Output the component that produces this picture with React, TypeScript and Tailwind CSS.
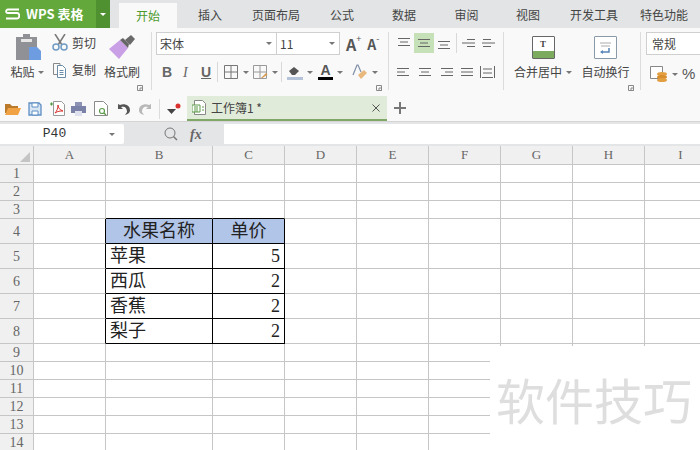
import React from "react";

const columns = [
  { label: "A", width: "w-[72px]" },
  { label: "B", width: "w-[107px]" },
  { label: "C", width: "w-[72px]" },
  { label: "D", width: "w-[72px]" },
  { label: "E", width: "w-[72px]" },
  { label: "F", width: "w-[72px]" },
  { label: "G", width: "w-[72px]" },
  { label: "H", width: "w-[72px]" },
  { label: "I", width: "w-[72px]" },
];

const rowHeights: Record<number, string> = {
  4: "h-[25px]",
  5: "h-[25px]",
  6: "h-[25px]",
  7: "h-[25px]",
  8: "h-[25px]",
};

const tabs = [
  { label: "插入", width: "w-[66px]" },
  { label: "页面布局", width: "w-[66px]" },
  { label: "公式", width: "w-[66px]" },
  { label: "数据", width: "w-[58px]" },
  { label: "审阅", width: "w-[67px]" },
  { label: "视图", width: "w-[56px]" },
  { label: "开发工具", width: "w-[76px]" },
  { label: "特色功能", width: "w-[64px]" },
];

const tableData: Record<number, [string, string]> = {
  4: ["水果名称", "单价"],
  5: ["苹果", "5"],
  6: ["西瓜", "2"],
  7: ["香蕉", "2"],
  8: ["梨子", "2"],
};

const Caret = () => (
  <svg width="6" height="3" viewBox="0 0 6 3" className="shrink-0">
    <path d="M0 0h6L3 3z" fill="#777" />
  </svg>
);

const Launcher = () => (
  <svg width="6" height="6" viewBox="0 0 6 6">
    <path d="M.5.5h5v5h-5zM3 3h2.500v2.500H3z" fill="none" stroke="#888" strokeWidth="1" />
  </svg>
);

const Sep = () => <div className="w-px h-[58px] bg-[#dcdcdc] shrink-0" />;
const SmallSep = () => <div className="w-px h-[20px] bg-[#d8d8d8] shrink-0" />;

const Lines = ({ rows }: { rows: [number, number][] }) => (
  <svg width="14" height="12" viewBox="0 0 14 12">
    {rows.map(([x, w], i) => (
      <path key={i} d={`M${x} ${2.5 + i * 3.5}h${w}`} stroke="#666" strokeWidth="1" />
    ))}
  </svg>
);

const GridIcon = ({ accent }: { accent?: boolean }) => (
  <svg width="16" height="16" viewBox="0 0 16 16">
    <path d="M1.500 1.500h13v13h-13zM8 1.500v13M1.500 8h13" fill="none" stroke={accent ? "#999" : "#777"} />
    {accent && <path d="M9 14l5-5 1.500 1.500-5 3.500z" fill="#d99a4e" />}
  </svg>
);

const Ribbon = () => (
  <div className="h-[68px] bg-[#f9f9f9] flex items-start pt-[4px] shrink-0">
    {/* clipboard */}
    <div className="w-[151px] h-[59px] flex shrink-0 relative">
      <div className="w-[52px] flex flex-col items-center pl-[5px]">
        <svg width="26" height="27" viewBox="0 0 26 27" className="mt-[1px]">
          <path d="M0 4h7V1h7v3h7v23H0z" fill="#8f9196" />
          <rect x="5" y="6" width="11" height="3" fill="#e6e6e6" />
          <path d="M13 14h8l4 4v9H13z" fill="#6d9de0" />
        </svg>
        <div className="flex items-center gap-[3px] mt-[5px] text-[12px] leading-[14px] text-[#444] -ml-[3px]">
          粘贴
          <Caret />
        </div>
      </div>
      <div className="w-[50px] flex flex-col gap-[10px] pt-[2px]">
        <div className="flex items-center gap-[4px] h-[17px]">
          <svg width="16" height="17" viewBox="0 0 16 17">
            <path d="M3 0l7 11M13 0L6 11" stroke="#777" strokeWidth="1.500" />
            <circle cx="4" cy="13" r="3" fill="none" stroke="#6f9bc4" strokeWidth="1.500" />
            <circle cx="12" cy="13" r="3" fill="none" stroke="#6f9bc4" strokeWidth="1.500" />
          </svg>
          <span className="text-[12px] text-[#444] leading-[14px]">剪切</span>
        </div>
        <div className="flex items-center gap-[4px] h-[17px]">
          <svg width="16" height="16" viewBox="0 0 16 16">
            <path d="M5 12.500H1.500v-11H8v2" fill="none" stroke="#888" />
            <path d="M5.500 3.500h5l3 3v9h-8z" fill="#fff" stroke="#6a8ca8" />
            <path d="M7.500 8.500h4M7.500 10.500h4M7.500 12.500h4" stroke="#6a8ca8" />
          </svg>
          <span className="text-[12px] text-[#444] leading-[14px]">复制</span>
        </div>
      </div>
      <div className="w-[40px] flex flex-col items-center">
        <svg width="26" height="24" viewBox="0 0 26 24" className="mt-[3px]">
          <path d="M0 14l11-9 8 8-9 11z" fill="#c9a0e6" />
          <path d="M11 5l3-2 6 6-1 4z" fill="#666" />
          <path d="M16 5l6-5 4 4-5 6z" fill="#6a6a6a" />
        </svg>
        <span className="mt-[6px] text-[12px] leading-[14px] text-[#444] whitespace-nowrap">格式刷</span>
      </div>
      <div className="absolute left-[137px] top-[53px]"><Launcher /></div>
    </div>
    <Sep />
    {/* font */}
    <div className="w-[236px] h-[59px] pl-[4px] shrink-0 relative">
      <div className="flex items-center">
        <div className="w-[184px] h-[23px] border border-[#cfcfcf] bg-white flex text-[12px] text-[#444]">
          <div className="w-[120px] border-r border-[#cfcfcf] flex items-center justify-between pl-[3px] pr-[4px]">
            宋体
            <Caret />
          </div>
          <div className="flex-1 flex items-center justify-between pl-[3px] pr-[4px]">
            11
            <Caret />
          </div>
        </div>
        <span className="ml-[6px] text-[16px] font-bold text-[#555] leading-none">A</span>
        <span className="text-[9px] text-[#555] -mt-[10px] leading-none">+</span>
        <span className="ml-[6px] text-[14px] font-bold text-[#555] leading-none">A</span>
        <span className="text-[9px] text-[#555] -mt-[10px] leading-none">-</span>
      </div>
      <div className="flex items-center mt-[7px] h-[20px]">
        <span className="w-[10px] ml-[6px] text-[14px] font-bold text-[#666] font-['Liberation_Sans',sans-serif]">B</span>
        <span className="w-[10px] ml-[11px] text-[14px] italic text-[#666] font-['Liberation_Serif',serif]">I</span>
        <span className="ml-[8px] mr-[6px] text-[14px] font-bold text-[#666] underline font-['Liberation_Sans',sans-serif]">U</span>
        <SmallSep />
        <div className="ml-[5px] flex items-center gap-[4px]"><GridIcon /><Caret /></div>
        <div className="ml-[3px] flex items-center gap-[4px]"><GridIcon accent /><Caret /></div>
        <div className="ml-[3px]"><SmallSep /></div>
        <div className="ml-[5px] flex items-center gap-[4px]">
          <svg width="16" height="16" viewBox="0 0 16 16">
            <path d="M2 7l5-4 5 4-4 4H5z" fill="#555" />
            <path d="M0 13h16v3H0z" fill="#b4c3d8" />
          </svg>
          <Caret />
        </div>
        <div className="ml-[5px] flex items-center gap-[4px]">
          <div className="w-[15px] h-[16px] flex flex-col items-center">
            <span className="text-[14px] font-bold leading-[13px] text-[#555] font-['Liberation_Sans',sans-serif]">A</span>
            <div className="w-[15px] h-[3px] bg-black" />
          </div>
          <Caret />
        </div>
        <div className="ml-[9px] flex items-center gap-[4px]">
          <svg width="16" height="16" viewBox="0 0 16 16">
            <path d="M1 11L5 1h1l3 7" fill="none" stroke="#7f8fa8" strokeWidth="1.200" />
            <path d="M6 11l6-5 3 3-6 6z" fill="#e8b87c" />
          </svg>
          <Caret />
        </div>
      </div>
      <div className="absolute left-[224px] top-[53px]"><Launcher /></div>
    </div>
    <Sep />
    {/* alignment */}
    <div className="w-[114px] h-[59px] pl-[5px] shrink-0">
      <div className="flex items-center h-[22px]">
        <div className="w-[20px] flex justify-center -mt-[3px]"><Lines rows={[[1, 12], [3, 8], [1, 12]]} /></div>
        <div className="w-[20px] h-[20px] bg-[#c6e0b8] flex items-center justify-center"><Lines rows={[[1, 12], [3, 8], [1, 12]]} /></div>
        <div className="w-[20px] flex justify-center pt-[4px]"><Lines rows={[[1, 12], [3, 8], [1, 12]]} /></div>
        <div className="ml-[2px]"><SmallSep /></div>
        <div className="ml-[5px] w-[16px]"><Lines rows={[[5, 8], [0, 13], [5, 8]]} /></div>
        <div className="ml-[4px] w-[16px]"><Lines rows={[[1, 8], [0, 13], [1, 8]]} /></div>
      </div>
      <div className="flex items-center h-[20px] mt-[8px] ml-[3px] gap-[8px]">
        <Lines rows={[[0, 12], [0, 8], [0, 12]]} />
        <Lines rows={[[0, 12], [2, 8], [0, 12]]} />
        <Lines rows={[[0, 12], [4, 8], [0, 12]]} />
        <div className="-ml-[2px]"><Lines rows={[[0, 12], [0, 12], [0, 12]]} /></div>
        <svg width="15" height="14" viewBox="0 0 15 14" className="-ml-[3px]">
          <path d="M.5 1v12M14.500 1v12M2 12.500h11M3 4h9M3 8h9" stroke="#666" fill="none" />
        </svg>
      </div>
    </div>
    <Sep />
    {/* merge */}
    <div className="w-[136px] h-[59px] flex shrink-0 relative">
      <div className="w-[77px] flex flex-col items-center pl-[1px]">
        <div className="w-[23px] h-[23px] mt-[4px] border border-[#666] bg-white flex flex-col rounded-[1px]">
          <div className="flex-1 flex items-center justify-center text-[9px] font-bold leading-none text-[#444] font-['Liberation_Serif',serif]">T</div>
          <div className="h-[7px] bg-[#7cab5d]" />
        </div>
        <div className="mt-[6px] flex items-center gap-[4px] text-[12px] leading-[14px] text-[#444] whitespace-nowrap">
          合并居中
          <Caret />
        </div>
      </div>
      <div className="flex-1 flex flex-col items-center pr-[10px]">
        <div className="w-[23px] h-[23px] mt-[4px] border border-[#8a9aa8] bg-white rounded-[1px] flex items-center justify-center">
          <svg width="15" height="15" viewBox="0 0 15 15">
            <path d="M2 3h11M3 6h9" stroke="#aaa" />
            <path d="M3 12h8V8" fill="none" stroke="#5a85b8" strokeWidth="1.500" />
            <path d="M5 10v4l-3-2z" fill="#5a85b8" />
          </svg>
        </div>
        <span className="mt-[6px] text-[12px] leading-[14px] text-[#444] whitespace-nowrap">自动换行</span>
      </div>
      <div className="absolute left-[124px] top-[53px]"><Launcher /></div>
    </div>
    <Sep />
    {/* number */}
    <div className="flex-1 pl-[5px] overflow-hidden">
      <div className="w-[70px] h-[23px] border border-[#cfcfcf] bg-white text-[12px] text-[#444] pl-[5px] flex items-center">常规</div>
      <div className="flex items-center mt-[8px] pl-[4px]">
        <svg width="18" height="18" viewBox="0 0 18 18">
          <path d="M.5 1.500h12v12H.5z" fill="#fff" stroke="#888" />
          <ellipse cx="12" cy="9" rx="5" ry="2" fill="#e3a043" />
          <ellipse cx="12" cy="12" rx="5" ry="2" fill="#d98e2e" />
          <ellipse cx="12" cy="15" rx="5" ry="2" fill="#e3a043" />
        </svg>
        <div className="ml-[4px]"><Caret /></div>
        <span className="ml-[4px] text-[15px] text-[#555] font-['Liberation_Sans',sans-serif]">%</span>
      </div>
    </div>
  </div>
);

const QuickBar = () => (
  <div className="h-[25px] bg-[#f9f9f9] flex items-start shrink-0">
    <div className="w-[187px] h-[25px] flex items-center pl-[5px] shrink-0">
      <svg width="16" height="13" viewBox="0 0 16 13">
        <path d="M0 2h5l2 2h6v2H4L2 11H0z" fill="#b97a2c" />
        <path d="M3 6h13l-3 7H0z" fill="#f0a245" />
      </svg>
      <svg width="14" height="14" viewBox="0 0 14 14" className="ml-[7px]">
        <path d="M1 1h10l2 2v10H1z" fill="#d8e6f4" stroke="#5f8fc4" strokeWidth="1.300" />
        <path d="M4 1h6v4H4zM4 9h6v4H4z" fill="#fff" stroke="#5f8fc4" />
      </svg>
      <svg width="15" height="15" viewBox="0 0 15 15" className="ml-[8px]">
        <path d="M3.500.5h8l3 3v11h-11z" fill="#fff" stroke="#999" />
        <path d="M5 12c2-2 3-5 3-8 0 3 2 5 5 6-3 0-5 0-8 2z" fill="none" stroke="#d9322e" />
        <path d="M0 3h3M1.500 1.500v3" stroke="#4a9a3a" strokeWidth="1.200" />
      </svg>
      <svg width="15" height="14" viewBox="0 0 15 14" className="ml-[6px]">
        <path d="M4 0h7v4H4z" fill="#8d93b5" />
        <path d="M0 4h15v7H0z" fill="#7b82a8" />
        <path d="M4 9h7v5H4z" fill="#dfe2ee" />
      </svg>
      <svg width="14" height="15" viewBox="0 0 14 15" className="ml-[8px]">
        <path d="M.5.500h9l4 4v10H.5z" fill="#fff" stroke="#8a8a8a" />
        <circle cx="8" cy="10" r="2.500" fill="none" stroke="#5a9a4a" strokeWidth="1.200" />
        <path d="M10 12l2 2" stroke="#5a9a4a" strokeWidth="1.200" />
      </svg>
      <svg width="13" height="12" viewBox="0 0 13 12" className="ml-[9px]">
        <path d="M1 1v5h5L4 4c3-1 6 0 6 5l-2 3c4-1 5-3 5-5 0-5-6-7-10-5z" fill="#555" />
      </svg>
      <svg width="13" height="12" viewBox="0 0 13 12" className="ml-[9px]">
        <path d="M12 1v5H7l2-2C6 3 3 4 3 9l2 3C1 11 0 9 0 7c0-5 6-7 10-5z" fill="#b8b8b8" />
      </svg>
      <div className="w-px h-[20px] bg-[#dcdcdc] ml-[7px]" />
      <svg width="14" height="12" viewBox="0 0 14 12" className="ml-[7px]">
        <path d="M0 6h9L4.500 11z" fill="#444" />
        <circle cx="11" cy="3" r="2.500" fill="#d9322e" />
      </svg>
    </div>
    <div className="w-[200px] h-[25px] bg-[#e1ebd9] border-b-2 border-[#7fa868] flex items-center pl-[5px] pr-[7px] shrink-0">
      <svg width="14" height="15" viewBox="0 0 14 15">
        <path d="M2.500.500h8l3 3v11h-11z" fill="#fff" stroke="#888" />
        <path d="M0 5h8v7H0z" fill="#fff" stroke="#5f9a4a" />
        <path d="M2 7h4M2 9h4M2 11h4M10 7h2M10 10h2" stroke="#5f9a4a" />
      </svg>
      <span className="ml-[5px] text-[12px] text-[#444] leading-none whitespace-pre">工作簿1 *</span>
      <svg width="8" height="8" viewBox="0 0 8 8" className="ml-auto">
        <path d="M.5.500l7 7M7.500.500l-7 7" stroke="#555" />
      </svg>
    </div>
    <svg width="14" height="14" viewBox="0 0 14 14" className="ml-[6px] mt-[5px]">
      <path d="M7 1v12M1 7h12" stroke="#777" strokeWidth="2" />
    </svg>
  </div>
);

const FormulaBar = () => (
  <div className="h-[25px] bg-[#e4e5e7] border-t border-[#d4d4d4] flex items-start pt-[2px] shrink-0">
    <div className="w-[124px] h-[20px] bg-white flex items-center shrink-0 rounded-r-[2px]">
      <span className="w-[109px] text-center text-[13px] text-[#333] font-['Liberation_Mono',monospace]">P40</span>
      <Caret />
    </div>
    <div className="w-[100px] h-[20px] flex items-center shrink-0 pl-[40px] text-[#777]">
      <svg width="14" height="14" viewBox="0 0 14 14">
        <circle cx="6" cy="6" r="5" fill="none" stroke="#777" />
        <path d="M9.500 9.500l3.500 3.500" stroke="#777" strokeWidth="1.500" />
      </svg>
      <span className="ml-[12px] text-[14px] italic font-bold text-[#666] font-['Liberation_Serif',serif]">fx</span>
    </div>
    <div className="flex-1 h-[20px] bg-white" />
  </div>
);

const cellBorder = (row: number, col: number) => {
  const inTable = row >= 4 && row <= 8 && (col === 1 || col === 2);
  const leftOfTable = row >= 4 && row <= 8 && col === 0;
  const aboveTable = row === 3 && (col === 1 || col === 2);
  if (inTable) return "border-r border-b border-black";
  if (leftOfTable) return "border-b border-r border-b-[#c6c6c6] border-r-black";
  if (aboveTable) return "border-r border-b border-r-[#c6c6c6] border-b-black";
  return "border-r border-b border-[#c6c6c6]";
};

const Sheet = () => {
  const rows = Array.from({ length: 14 }, (_, i) => i + 1);
  return (
    <div className="flex-1 overflow-hidden bg-white font-['Liberation_Serif','Noto_Sans_CJK_SC',serif]">
      <div className="flex h-[19px] bg-[#f0f0f0] border-b border-[#c6c6c6]">
        <div className="w-[34px] shrink-0 border-r border-[#c6c6c6] flex items-end justify-end pr-[3px] pb-[2px]">
          <svg width="10" height="10" viewBox="0 0 10 10"><path d="M10 0v10H0z" fill="#c4c4c4" /></svg>
        </div>
        {columns.map((c) => (
          <div key={c.label} className={`${c.width} shrink-0 border-r border-[#c6c6c6] flex items-center justify-center text-[13px] text-[#666]`}>
            {c.label}
          </div>
        ))}
      </div>
      {rows.map((r) => (
        <div key={r} className={`flex ${rowHeights[r] ?? "h-[18px]"}`}>
          <div className="w-[34px] shrink-0 bg-[#f0f0f0] border-r border-b border-[#c6c6c6] flex items-center justify-center text-[14px] text-[#666]">
            {r}
          </div>
          {columns.map((c, i) => {
            const data = tableData[r];
            const isHead = r === 4 && (i === 1 || i === 2);
            const text = data && (i === 1 || i === 2) ? data[i - 1] : "";
            return (
              <div
                key={c.label}
                className={`${c.width} shrink-0 flex items-center text-[18px] leading-none text-[#222] ${cellBorder(r, i)} ${isHead ? "bg-[#b1c5e8] justify-center" : i === 2 ? "justify-end pr-[4px]" : "pl-[4px]"}`}
              >
                {text}
              </div>
            );
          })}
        </div>
      ))}
    </div>
  );
};

export default function App() {
  return (
    <div className="relative w-[700px] h-[450px] overflow-hidden flex flex-col bg-white font-['Noto_Sans_CJK_SC',sans-serif]">
      {/* title bar */}
      <div className="h-[28px] bg-[#e3e4e6] flex items-end shrink-0">
        <div className="w-[96px] h-[28px] bg-[#62a83a] flex items-center pl-[5px] text-white shrink-0">
          <svg width="15" height="12" viewBox="0 0 15 12">
            <path d="M14 1.500H3C.5 1.500.5 5 3 5h9c3 0 3 5.500 0 5.500H1" fill="none" stroke="#fff" strokeWidth="1.800" />
          </svg>
          <span className="ml-[6px] text-[13px] font-bold whitespace-nowrap">WPS 表格</span>
        </div>
        <div className="w-[14px] h-[28px] bg-[#4f9130] flex items-center justify-center shrink-0">
          <svg width="6" height="3" viewBox="0 0 6 3"><path d="M0 0h6L3 3z" fill="#fff" /></svg>
        </div>
        <div className="w-[9px] shrink-0" />
        <div className="w-[58px] h-[25px] bg-[#f9f9f9] flex items-center justify-center text-[12px] text-[#4b9a2b] shrink-0">开始</div>
        {tabs.map((t) => (
          <div key={t.label} className={`${t.width} h-[28px] flex items-center justify-center pt-[2px] text-[12px] text-[#444] whitespace-nowrap shrink-0`}>
            {t.label}
          </div>
        ))}
      </div>
      <Ribbon />
      <QuickBar />
      <FormulaBar />
      <Sheet />
      {/* watermark patch pasted over the sheet */}
      <div className="absolute left-[490px] top-[346px] w-[210px] h-[104px] bg-white flex items-start pl-[6px] pt-[25px]">
        <span className="text-[49px] leading-[56px] text-[#dedede] whitespace-nowrap">软件技巧</span>
      </div>
    </div>
  );
}
